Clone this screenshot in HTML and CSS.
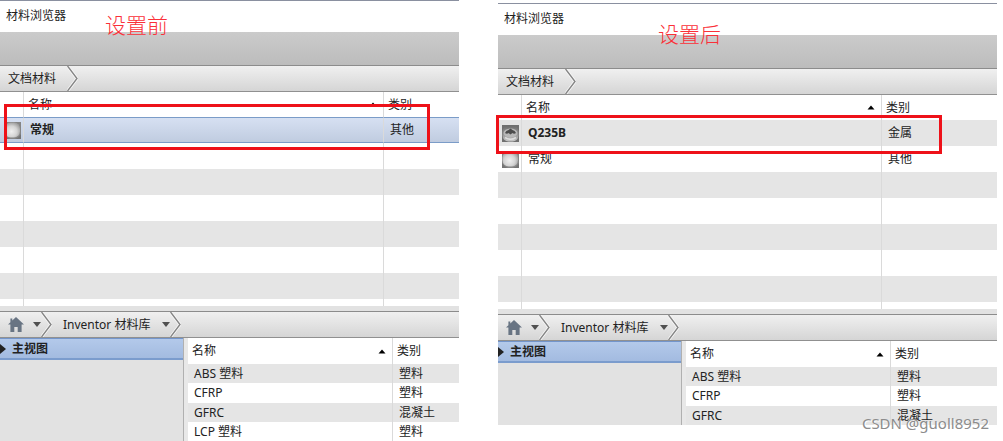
FILE: index.html
```
<!DOCTYPE html>
<html lang="zh-CN">

<head>
<title>材料浏览器</title>
<meta charset="UTF-8">

<link rel="stylesheet" href="styles.css">
</head>

<body>

	<svg class="defs" width="0" height="0" aria-hidden="true">
		<defs>
			<radialGradient id="plain" cx="45%" cy="60%" r="60%">
				<stop offset="0" stop-color="#f0f0f0"/>
				<stop offset="0.6" stop-color="#d4d4d4"/>
				<stop offset="1" stop-color="#a2a2a2"/>
			</radialGradient>
			<linearGradient id="metal" x1="0" y1="0" x2="0" y2="1">
				<stop offset="0" stop-color="#6c6c6c"/>
				<stop offset="0.6" stop-color="#999"/>
				<stop offset="1" stop-color="#c8c8c8"/>
			</linearGradient>
		</defs>
		<symbol id="chevron" viewBox="0 0 11 25">
			<path d="M0.5 0L10 12.5L0.5 25" fill="none" stroke="#f8f8f8" stroke-width="3"/>
			<path d="M0.5 0L10 12.5L0.5 25" fill="none" stroke="#858585" stroke-width="1.4"/>
		</symbol>
		<symbol id="home" viewBox="0 0 16 15">
			<path d="M8 0L16 7.6H13.6V15H9.7V10H6.3V15H2.4V7.6H0L2.4 5.3V1.5H4.3V3.5Z" fill="#687483"/>
		</symbol>
		<symbol id="down" viewBox="0 0 8 5">
			<path d="M0 0H8L4 5Z" fill="#505050"/>
		</symbol>
		<symbol id="up" viewBox="0 0 8 5">
			<path d="M4 0.5L7.5 4.5H0.5Z" fill="#000"/>
		</symbol>
		<symbol id="right" viewBox="0 0 6 10">
			<path d="M0 0L6 5L0 10Z" fill="#222"/>
		</symbol>
		<symbol id="ball-plain" viewBox="0 0 17 17">
			<rect width="17" height="17" fill="#858585"/>
			<rect x="0.5" y="0.5" width="15.5" height="15" rx="6" fill="url(#plain)"/>
			<path d="M0 12Q2 16 6 17H0ZM17 12Q15 16 11 17H17Z" fill="#747474"/>
		</symbol>
		<symbol id="ball-metal" viewBox="0 0 17 17">
			<rect width="17" height="17" fill="#707070"/>
			<rect x="0.5" y="0.5" width="16" height="16" rx="6" fill="url(#metal)"/>
			<ellipse cx="8.5" cy="8" rx="7" ry="4.5" fill="#b8b8b8"/>
			<path d="M3 8Q4 5.5 6.5 5L8.5 3.5L10.5 5Q13 5.5 14 8Q12 9.500 10.500 8L8.500 9.500L6.500 8Q5 9.500 3 8Z" fill="#4c4c4c"/>
			<path d="M3 12.500Q8.500 16 14 12.500" fill="none" stroke="#dedede" stroke-width="1.500"/>
		</symbol>
	</svg>

	<main class="compare">
		<section class="browser before">
			<h1 class="title">材料浏览器</h1>
			<div class="toolbar"></div>
			<nav class="crumbs">
				<button class="crumb">文档材料</button>
				<svg class="chevron"><use href="#chevron"/></svg>
			</nav>
			<table class="materials">
				<colgroup><col class="col-icon"><col class="col-name"><col></colgroup>
				<thead>
					<tr>
						<th></th>
						<th><button class="sort">名称<svg class="up"><use href="#up"/></svg></button></th>
						<th><button class="sort">类别</button></th>
					</tr>
				</thead>
				<tbody>
					<tr class="selected">
						<td><svg class="ball"><use href="#ball-plain"/></svg></td>
						<td class="current">常规</td>
						<td>其他</td>
					</tr>
					<tr><td></td><td></td><td></td></tr>
					<tr><td></td><td></td><td></td></tr>
					<tr><td></td><td></td><td></td></tr>
					<tr><td></td><td></td><td></td></tr>
					<tr><td></td><td></td><td></td></tr>
					<tr><td></td><td></td><td></td></tr>
					<tr class="cut"><td></td><td></td><td></td></tr>
				</tbody>
			</table>
			<div class="splitter"></div>
			<nav class="crumbs">
				<button class="crumb home" aria-label="主页"><svg class="house"><use href="#home"/></svg><svg class="down"><use href="#down"/></svg></button>
				<svg class="chevron"><use href="#chevron"/></svg>
				<button class="crumb library">Inventor 材料库<svg class="down"><use href="#down"/></svg></button>
				<svg class="chevron"><use href="#chevron"/></svg>
			</nav>
			<div class="lower">
				<div class="tree">
					<button class="node"><svg class="right"><use href="#right"/></svg>主视图</button>
				</div>
				<table class="list">
					<colgroup><col class="col-item"><col></colgroup>
					<thead>
						<tr>
							<th><button class="sort">名称<svg class="up"><use href="#up"/></svg></button></th>
							<th><button class="sort">类别</button></th>
						</tr>
					</thead>
					<tbody>
						<tr><td>ABS 塑料</td><td>塑料</td></tr>
						<tr><td>CFRP</td><td>塑料</td></tr>
						<tr><td>GFRC</td><td>混凝土</td></tr>
						<tr><td>LCP 塑料</td><td>塑料</td></tr>
					</tbody>
				</table>
			</div>
			<p class="note">设置前</p>
			<div class="frame"></div>
		</section>

		<section class="browser after">
			<h1 class="title">材料浏览器</h1>
			<div class="toolbar"></div>
			<nav class="crumbs">
				<button class="crumb">文档材料</button>
				<svg class="chevron"><use href="#chevron"/></svg>
			</nav>
			<table class="materials">
				<colgroup><col class="col-icon"><col class="col-name"><col></colgroup>
				<thead>
					<tr>
						<th></th>
						<th><button class="sort">名称<svg class="up"><use href="#up"/></svg></button></th>
						<th><button class="sort">类别</button></th>
					</tr>
				</thead>
				<tbody>
					<tr>
						<td><svg class="ball"><use href="#ball-metal"/></svg></td>
						<td class="current">Q235B</td>
						<td>金属</td>
					</tr>
					<tr>
						<td><svg class="ball"><use href="#ball-plain"/></svg></td>
						<td>常规</td>
						<td>其他</td>
					</tr>
					<tr><td></td><td></td><td></td></tr>
					<tr><td></td><td></td><td></td></tr>
					<tr><td></td><td></td><td></td></tr>
					<tr><td></td><td></td><td></td></tr>
					<tr><td></td><td></td><td></td></tr>
					<tr class="cut"><td></td><td></td><td></td></tr>
				</tbody>
			</table>
			<div class="splitter"></div>
			<nav class="crumbs">
				<button class="crumb home" aria-label="主页"><svg class="house"><use href="#home"/></svg><svg class="down"><use href="#down"/></svg></button>
				<svg class="chevron"><use href="#chevron"/></svg>
				<button class="crumb library">Inventor 材料库<svg class="down"><use href="#down"/></svg></button>
				<svg class="chevron"><use href="#chevron"/></svg>
			</nav>
			<div class="lower">
				<div class="tree">
					<button class="node"><svg class="right"><use href="#right"/></svg>主视图</button>
				</div>
				<table class="list">
					<colgroup><col class="col-item"><col></colgroup>
					<thead>
						<tr>
							<th><button class="sort">名称<svg class="up"><use href="#up"/></svg></button></th>
							<th><button class="sort">类别</button></th>
						</tr>
					</thead>
					<tbody>
						<tr><td>ABS 塑料</td><td>塑料</td></tr>
						<tr><td>CFRP</td><td>塑料</td></tr>
						<tr><td>GFRC</td><td>混凝土</td></tr>
					</tbody>
				</table>
			</div>
			<p class="note">设置后</p>
			<div class="frame"></div>
		</section>

		<div class="watermark">CSDN @guoll8952</div>
	</main>

</body>
</html>
```

FILE: styles.css
```
* {
	box-sizing: border-box;
}

body {
	margin: 0;
	background: #fff;
	color: #222;
	font: 12px/18px "Noto Sans", "Noto Sans CJK SC", sans-serif;
}

button {
	border: 0;
	padding: 0;
	background: none;
	color: inherit;
	font: inherit;
}

svg {
	display: block;
	flex: none;
}

.defs {
	position: absolute;
}

.compare {
	position: relative;
	display: grid;
	grid-template-columns: 459fr 499fr;
	align-items: start;
	gap: 39px;
	padding-right: 6px;
}

.browser {
	position: relative;
	border-top: 1px solid #8a90a0;
}
.after {
	margin-top: 3px;
}

.title {
	margin: 0;
	padding-left: 6px;
	height: 31px;
	font-size: 12px;
	font-weight: normal;
	line-height: 30px;
}

.toolbar {
	height: 34px;
	border-bottom: 1px solid #8c8c8c;
	background: linear-gradient(#cbcbcb, #bcbcbc);
}

/* breadcrumb bars */
.crumbs {
	display: flex;
	height: 26px;
	border-bottom: 1px solid #909090;
	background: linear-gradient(#f0f0f0, #d5d5d5);
}
.crumb {
	display: flex;
	align-items: center;
	padding: 0 11px 0 8px;
}
.home {
	gap: 9px;
	padding-right: 0;
}
.library {
	gap: 12px;
	padding: 0 0 0 11px;
}
.chevron {
	width: 11px;
	height: 25px;
}
.house {
	width: 16px;
	height: 15px;
}
.down, .up {
	width: 8px;
	height: 5px;
}

/* tables */
table {
	width: 100%;
	table-layout: fixed;
	border-spacing: 0;
}
th, td {
	padding: 0;
	border-right: 1px solid #dadada;
	text-align: left;
	font-weight: normal;
	white-space: nowrap;
}
th:last-child, td:last-child {
	border-right: 0;
}
.sort {
	display: flex;
	align-items: center;
	justify-content: space-between;
	width: 100%;
	padding: 0 6px 0 4px;
}

.col-icon {
	width: 24px;
}
.col-name {
	width: 360px;
}
.materials th {
	height: 25px;
}
.materials td {
	height: 26px;
	padding-left: 6px;
}
.materials td:first-child {
	padding-left: 4px;
}
.materials .cut td {
	height: 7px;
}
.materials tbody tr:nth-child(odd) {
	background: #e5e5e5;
}
.materials .selected td {
	border-top: 1px solid #7b9cc8;
	border-bottom: 1px solid #7b9cc8;
	background: linear-gradient(#d6e0f2, #c0cce0);
}
.current {
	font-weight: bold;
}
.ball {
	width: 17px;
	height: 17px;
}

.splitter {
	height: 6px;
	border-bottom: 1px solid #8c8c8c;
	background: #e2e2e2;
}

/* library part */
.lower {
	display: flex;
}
.tree {
	flex: none;
	width: 184px;
	border-right: 1px solid #b0b0b0;
	background: #e2e2e2;
}
.node {
	display: flex;
	align-items: center;
	gap: 6px;
	width: 100%;
	height: 22px;
	border-top: 1px solid #7395cb;
	border-bottom: 2px solid #7b9ccd;
	background: linear-gradient(#b3c9ea, #a3bbe0);
	font-weight: bold;
}
.right {
	width: 6px;
	height: 10px;
}
.list {
	flex: 1;
	border-left: 4px solid #e8e8e8;
}
.col-item {
	width: 205px;
}
.list th {
	height: 26px;
}
.list td {
	height: 19px;
	padding-left: 6px;
}
.list tbody tr:nth-child(even) td {
	height: 20px;
}
.list tbody tr:nth-child(odd) {
	background: #e5e5e5;
}
.list tbody tr:last-child td {
	height: 19px;
}

/* red marks over the panels */
.note {
	position: absolute;
	top: 9px;
	left: 105px;
	margin: 0;
	color: #fa3038;
	font-size: 21px;
	font-weight: 300;
	line-height: 30px;
}
.after .note {
	top: 15px;
	left: 160px;
}
.frame {
	position: absolute;
	top: 103px;
	left: 4px;
	right: 29px;
	height: 46px;
	border: 3px solid #ee1119;
}
.after .frame {
	top: 111px;
	left: -2px;
	right: 55px;
	height: 39px;
}

.watermark {
	position: absolute;
	right: 14px;
	bottom: 8px;
	color: #8c8c8c;
	font-size: 15px;
	line-height: 20px;
	text-shadow: 1px 1px 0 #fff;
}
```
